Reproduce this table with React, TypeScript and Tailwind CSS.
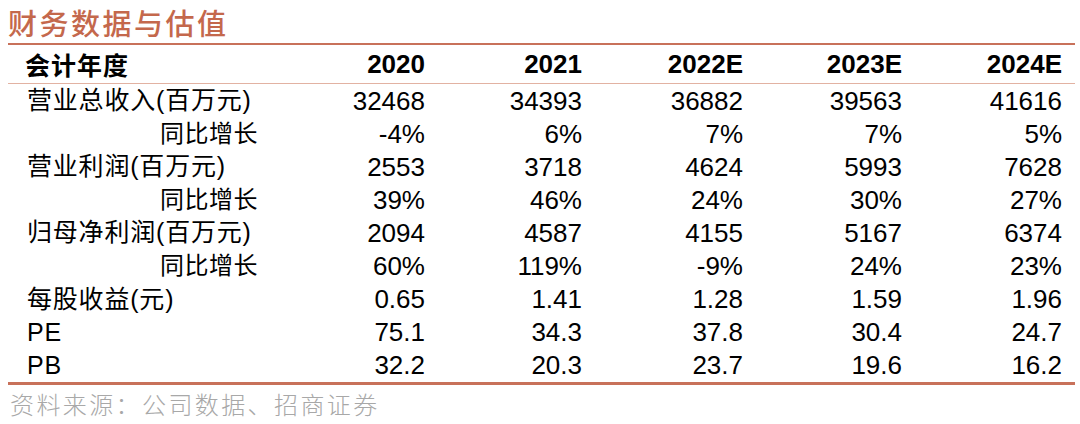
import React from "react";

const cols = ["2020", "2021", "2022E", "2023E", "2024E"];

const rows: { label: string; sub?: boolean; values: string[] }[] = [
  { label: "营业总收入(百万元)", values: ["32468", "34393", "36882", "39563", "41616"] },
  { label: "同比增长", sub: true, values: ["-4%", "6%", "7%", "7%", "5%"] },
  { label: "营业利润(百万元)", values: ["2553", "3718", "4624", "5993", "7628"] },
  { label: "同比增长", sub: true, values: ["39%", "46%", "24%", "30%", "27%"] },
  { label: "归母净利润(百万元)", values: ["2094", "4587", "4155", "5167", "6374"] },
  { label: "同比增长", sub: true, values: ["60%", "119%", "-9%", "24%", "23%"] },
  { label: "每股收益(元)", values: ["0.65", "1.41", "1.28", "1.59", "1.96"] },
  { label: "PE", values: ["75.1", "34.3", "37.8", "30.4", "24.7"] },
  { label: "PB", values: ["32.2", "20.3", "23.7", "19.6", "16.2"] },
];

const grid = "grid grid-cols-[257px_160px_157px_161px_159px_160px_1fr]";
const font = "font-['Liberation_Sans','Noto_Sans_CJK_SC',sans-serif]";

export default function App() {
  return (
    <div className={`w-[1080px] h-[424px] bg-white overflow-hidden ${font}`}>
      {/* title */}
      <div className="pl-[8px] pt-[4px] h-[43px] text-[29px] leading-[36px] tracking-[2.5px] text-[#c4684c] font-['Noto_Sans_CJK_SC',sans-serif] font-medium">
        财务数据与估值
      </div>

      {/* table */}
      <div className="ml-[8px] mr-[5px] border-t-[2px] border-b-[3px] border-[#c8715a]">
        <div className={`${grid} h-[39px] items-center border-b border-[#e2b2a2] text-[26px] font-bold text-black`}>
          <div className="pl-[17px] font-['Noto_Sans_CJK_SC',sans-serif] text-[25px] tracking-[1px]">会计年度</div>
          {cols.map((c) => (
            <div key={c} className="text-right">{c}</div>
          ))}
          <div />
        </div>

        {rows.map((r, i) => (
          <div key={i} className={`${grid} h-[33.1px] items-center text-[26px] leading-none text-black`}>
            <div
              className={`${r.sub ? "pl-[152px] text-[24px] tracking-[0.5px]" : "pl-[19px] text-[25px] tracking-[0.8px]"} whitespace-nowrap`}
            >
              {r.label}
            </div>
            {r.values.map((v, j) => (
              <div key={j} className="text-right">{v}</div>
            ))}
            <div />
          </div>
        ))}
      </div>

      {/* source */}
      <div className="pl-[10px] pt-[5px] text-[24px] leading-[28px] tracking-[2.4px] text-[#a8a8a8] font-['Noto_Sans_CJK_SC',sans-serif] font-light">
        资料来源：公司数据、招商证券
      </div>
    </div>
  );
}
